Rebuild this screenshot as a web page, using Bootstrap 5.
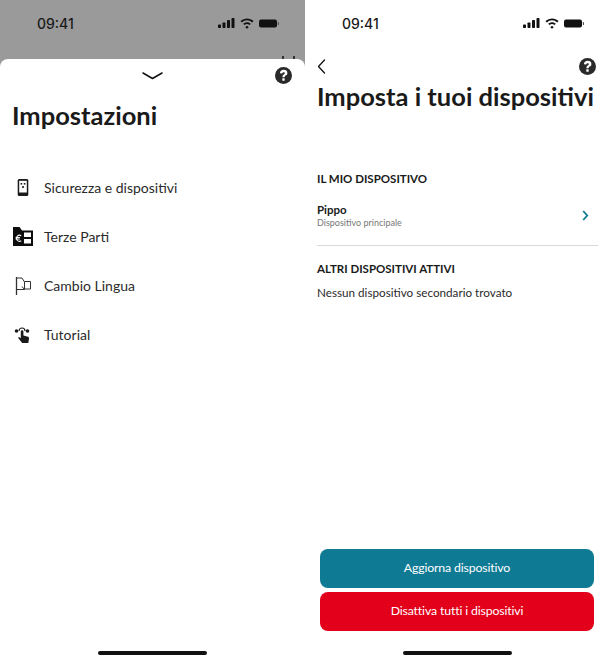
<!DOCTYPE html>
<html lang="it">
<head>
    <meta charset="UTF-8">
    <meta name="viewport" content="width=device-width, initial-scale=1.0">
    <title>Impostazioni</title>
    <link href="https://cdn.jsdelivr.net/npm/bootstrap@5.3.0/dist/css/bootstrap.min.css" rel="stylesheet">
    <script src="https://cdn.jsdelivr.net/npm/bootstrap@5.3.0/dist/js/bootstrap.bundle.min.js"></script>
    <style>
        html, body { height: 661px; overflow: hidden; }
        body { font-family: Lato, "Liberation Sans", sans-serif; color: #1a1a1a; background: #fff; }
        .pane { width: 305px; height: 661px; }
        .status-row { height: 47px; padding: 0 25px 1px 37px; font-family: Inter, sans-serif; font-size: 14px; font-weight: 500; flex: none; }
        .pane-left { background: #9a9a9a; }
        .peek-row { height: 12px; padding-right: 9px; flex: none; }
        .sheet { background: #fff; border-radius: 8px 8px 0 0; min-height: 0; }
        .sheet-top { height: 33px; }
        .sheet-title { font-size: 25.500px; font-weight: 700; line-height: 32px; margin: 7px 0 0 12px; }
        .menu-list { margin-top: 32px; }
        .menu-row { height: 49px; padding-left: 13px; font-size: 14px; color: #2b2b2b; }
        .menu-ico { width: 31px; flex: none; }
        .nav-top { height: 24px; margin-top: 7px; padding: 0 14px 0 12px; }
        .page-title { font-size: 25.500px; font-weight: 700; line-height: 34px; margin: 1px 0 0 12px; white-space: nowrap; }
        .sect-head { font-size: 11.500px; font-weight: 700; color: #1a1a1a; margin: 0; line-height: 16px; }
        .device-name { font-size: 11.500px; font-weight: 700; line-height: 14px; }
        .device-sub { font-size: 9px; color: #777; line-height: 12px; }
        .device-wrap { padding: 0 0 0 12px; margin-top: 58px; }
        .device-row { height: 57px; padding-right: 9px; padding-bottom: 3px; border-bottom: 1px solid #d9d9d9; margin-right: 12px; margin-top: 2px; }
        .sect-next { margin-top: 15px; }
        .empty-note { font-size: 11.700px; color: #2b2b2b; line-height: 16px; margin: 7px 0 0; }
        .act-btn { height: 39px; width: 274px; border-radius: 8px; border: 0; color: #fff; font-size: 12.300px; letter-spacing: -.15px; padding: 0; }
        .btn-teal { background: #0f7a94; }
        .btn-teal:hover { background: #0f7a94; color: #fff; }
        .btn-red { background: #e2001a; }
        .btn-red:hover { background: #e2001a; color: #fff; }
        .btn-stack { margin-bottom: 20px; padding-right: 1px; }
        .home-bar { width: 109px; height: 4px; background: #111; border-radius: 2px; flex: none; margin-bottom: 6px; }
        .help-sheet { margin-right: 13px; }
    </style>
</head>
<body class="d-flex m-0">

    <!-- Impostazioni -->
    <section class="pane pane-left d-flex flex-column">
        <div class="status-row d-flex align-items-center justify-content-between">
            <span>09:41</span>
            <svg width="62" height="12" viewBox="0 0 62 12" fill="#111">
                <rect x="0" y="7.500" width="3" height="3.500" rx=".7"/><rect x="4.500" y="5.500" width="3" height="5.500" rx=".7"/><rect x="9" y="3" width="3" height="8" rx=".7"/><rect x="13.500" y="1" width="3" height="10" rx=".7"/>
                <path d="M29 1.400c2.500 0 4.800 1 6.500 2.700l-1.300 1.400A7.400 7.400 0 0 0 29 3.300a7.400 7.400 0 0 0-5.200 2.200l-1.300-1.400A9.200 9.200 0 0 1 29 1.400zM29 5.200c1.500 0 2.800.6 3.800 1.500l-1.300 1.400a3.600 3.600 0 0 0-5 0l-1.300-1.400A5.400 5.400 0 0 1 29 5.200zM29 8.700l-1.700 1.500 1.700 1.600 1.700-1.600z"/>
                <rect x="41" y="2.500" width="18" height="8" rx="2"/><rect x="59.800" y="5" width="1.200" height="3" rx=".6" fill="#555"/>
            </svg>
        </div>
        <div class="peek-row d-flex align-items-end justify-content-end">
            <svg width="14" height="3" viewBox="0 0 14 3" fill="#333"><rect x="0" y="0" width="2" height="3"/><rect x="11" y="0" width="2" height="3"/></svg>
        </div>
        <div class="sheet flex-grow-1 d-flex flex-column">
            <div class="sheet-top d-flex align-items-center position-relative">
                <svg class="mx-auto" width="21" height="8" viewBox="0 0 21 8" fill="none" stroke="#111" stroke-width="1.500" stroke-linecap="round" stroke-linejoin="round"><path d="M1 1l9.500 5.500L20 1"/></svg>
                <svg class="position-absolute end-0 help-sheet" width="17" height="17" viewBox="0 0 17 17"><circle cx="8.500" cy="8.500" r="8.500" fill="#2a2a2a"/><path d="M4.900 6.300C4.900 4 6.600 2.800 8.700 2.800c2.200 0 3.700 1.200 3.700 3.100 0 1.400-.8 2.100-1.700 2.700-.7.500-1 .8-1 1.600H7.400c0-1.400.5-2 1.300-2.600.7-.5 1.100-.8 1.100-1.400 0-.6-.4-1-1.100-1-.8 0-1.300.5-1.300 1.300z" fill="#fff"/><rect x="7.300" y="11.300" width="2.400" height="2.400" rx=".4" fill="#fff"/></svg>
            </div>
            <h1 class="sheet-title">Impostazioni</h1>
            <div class="menu-list">
                <div class="menu-row d-flex align-items-center">
                    <div class="menu-ico">
                        <svg class="d-block" width="19" height="19" viewBox="0 0 19 19"><rect x="4.700" y="1" width="10.600" height="17" rx="1.500" fill="#1a1a1a"/><rect x="6.200" y="2.800" width="7.600" height="11.700" fill="#fff"/><rect x="7.600" y="5" width="1.600" height="1.600" fill="#1a1a1a"/><rect x="10.800" y="5" width="1.600" height="1.600" fill="#1a1a1a"/><rect x="9.200" y="8" width="1.600" height="2" fill="#1a1a1a"/></svg>
                    </div>
                    <span>Sicurezza e dispositivi</span>
                </div>
                <div class="menu-row d-flex align-items-center">
                    <div class="menu-ico">
                        <svg class="d-block" width="20" height="19" viewBox="0 0 20 19"><path d="M0 0h6.500l2.500 3.500h11V19H0z" fill="#0d0d0d"/><rect x="11" y="5.500" width="7" height="4.500" fill="#fff"/><rect x="11" y="12" width="7" height="4.500" fill="#fff"/><path d="M8.200 8.800a3 3 0 1 0 0 4.900M2.600 10.500h4.200M2.600 12h4.200" fill="none" stroke="#fff" stroke-width="1.100"/></svg>
                    </div>
                    <span>Terze Parti</span>
                </div>
                <div class="menu-row d-flex align-items-center">
                    <div class="menu-ico">
                        <svg class="d-block" width="19" height="20" viewBox="0 0 19 20" fill="none" stroke="#333" stroke-width="1"><path d="M3.500 1v18" stroke-width="1.300"/><path d="M3.500 2h5.500l2.500 4v7.500H3.500"/><path d="M11.500 5.500h6v7.500h-6.500l-2-2.500"/></svg>
                    </div>
                    <span>Cambio Lingua</span>
                </div>
                <div class="menu-row d-flex align-items-center">
                    <div class="menu-ico">
                        <svg class="d-block" width="19" height="20" viewBox="0 0 19 20" fill="#1a1a1a"><circle cx="3.500" cy="6" r="1.800"/><circle cx="14.500" cy="6" r="1.800"/><path d="M6 6a3 3 0 0 1 6 0" fill="none" stroke="#1a1a1a" stroke-width="1.200"/><path d="M7.800 6.500a1.300 1.300 0 0 1 2.600 0v4l4.600 1.200c.9.300 1.100 1 1 1.800l-.7 4.500H9.200L5 12.800l1-.9 1.800 1.300z"/></svg>
                    </div>
                    <span>Tutorial</span>
                </div>
            </div>
            <div class="home-bar mx-auto mt-auto"></div>
        </div>
    </section>

    <!-- Imposta i tuoi dispositivi -->
    <section class="pane d-flex flex-column">
        <div class="status-row d-flex align-items-center justify-content-between">
            <span>09:41</span>
            <svg width="62" height="12" viewBox="0 0 62 12" fill="#111">
                <rect x="0" y="7.500" width="3" height="3.500" rx=".7"/><rect x="4.500" y="5.500" width="3" height="5.500" rx=".7"/><rect x="9" y="3" width="3" height="8" rx=".7"/><rect x="13.500" y="1" width="3" height="10" rx=".7"/>
                <path d="M29 1.400c2.500 0 4.800 1 6.500 2.700l-1.300 1.400A7.400 7.400 0 0 0 29 3.300a7.400 7.400 0 0 0-5.200 2.200l-1.300-1.400A9.200 9.200 0 0 1 29 1.400zM29 5.200c1.500 0 2.800.6 3.800 1.500l-1.300 1.400a3.600 3.600 0 0 0-5 0l-1.300-1.400A5.400 5.400 0 0 1 29 5.200zM29 8.700l-1.700 1.500 1.700 1.600 1.700-1.600z"/>
                <rect x="41" y="2.500" width="18" height="8" rx="2"/><rect x="59.800" y="5" width="1.200" height="3" rx=".6" fill="#555"/>
            </svg>
        </div>
        <div class="nav-top d-flex align-items-center justify-content-between">
            <svg width="9" height="15" viewBox="0 0 9 15" fill="none" stroke="#111" stroke-width="1.300" stroke-linecap="round" stroke-linejoin="round"><path d="M7.500 1L1.500 7.500l6 6.500"/></svg>
            <svg width="17" height="17" viewBox="0 0 17 17"><circle cx="8.500" cy="8.500" r="8.500" fill="#2a2a2a"/><path d="M4.900 6.300C4.900 4 6.600 2.800 8.700 2.800c2.200 0 3.700 1.200 3.700 3.100 0 1.400-.8 2.100-1.700 2.700-.7.500-1 .8-1 1.600H7.400c0-1.400.5-2 1.300-2.600.7-.5 1.100-.8 1.100-1.400 0-.6-.4-1-1.100-1-.8 0-1.300.5-1.300 1.300z" fill="#fff"/><rect x="7.300" y="11.300" width="2.400" height="2.400" rx=".4" fill="#fff"/></svg>
        </div>
        <h1 class="page-title">Imposta i tuoi dispositivi</h1>
        <div class="device-wrap">
            <h2 class="sect-head">IL MIO DISPOSITIVO</h2>
            <div class="device-row d-flex align-items-center justify-content-between">
                <div>
                    <div class="device-name">Pippo</div>
                    <div class="device-sub">Dispositivo principale</div>
                </div>
                <svg width="7" height="11" viewBox="0 0 7 11" fill="none" stroke="#0f7a94" stroke-width="1.800"><path d="M1.200 1l4 4.500-4 4.500"/></svg>
            </div>
            <h2 class="sect-head sect-next">ALTRI DISPOSITIVI ATTIVI</h2>
            <p class="empty-note">Nessun dispositivo secondario trovato</p>
        </div>
        <div class="btn-stack d-flex flex-column align-items-center gap-1 mt-auto">
            <button type="button" class="btn act-btn btn-teal">Aggiorna dispositivo</button>
            <button type="button" class="btn act-btn btn-red">Disattiva tutti i dispositivi</button>
        </div>
        <div class="home-bar mx-auto"></div>
    </section>

</body>
</html>
